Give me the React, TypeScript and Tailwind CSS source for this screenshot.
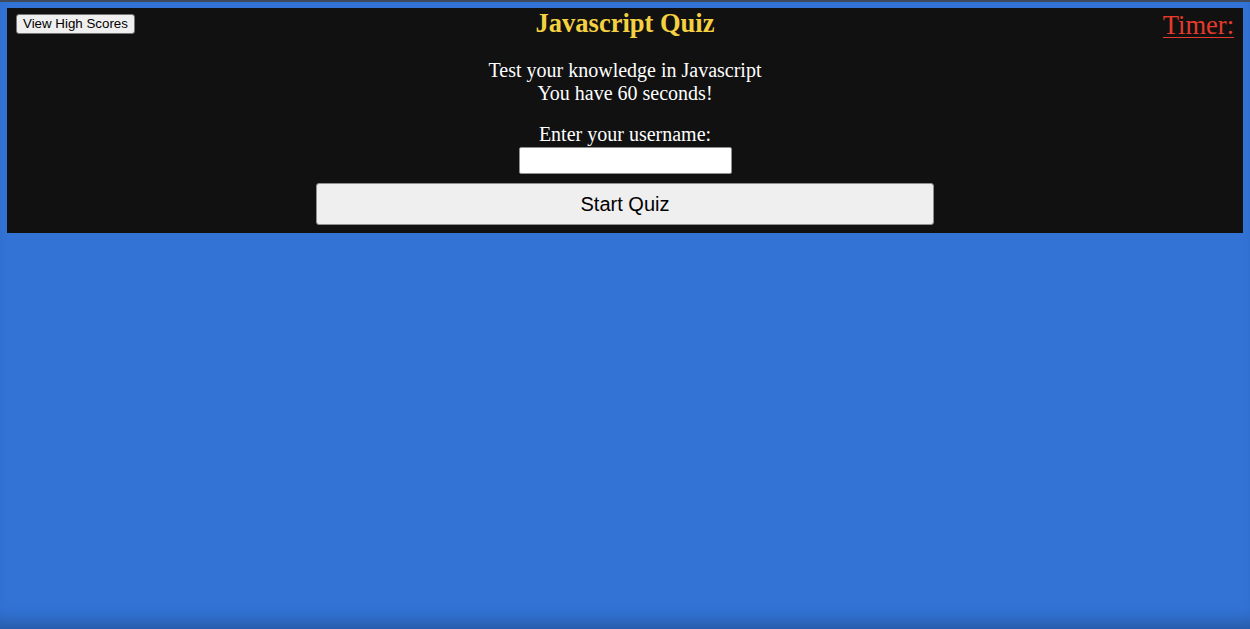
import React from "react";

export default function App() {
  return (
    <div className="min-h-[629px] bg-[#3273d5] border-t-2 border-[#3d4a5c] shadow-[inset_0_-18px_18px_-12px_rgba(0,0,0,0.25)] font-['Liberation_Serif',serif]">
      <div className="mx-[7px] mt-[6px] bg-[#111111] pb-[8px]">
        <div className="grid grid-cols-[1fr_auto_1fr] items-start px-[9px]">
          <div className="flex justify-start">
            <button className="mt-[6px] h-[20px] px-[6px] bg-[#efefef] border border-[#767676] rounded-[3px] text-[13.33px] leading-[18px] text-black font-['Liberation_Sans',Arial,sans-serif]">
              View High Scores
            </button>
          </div>
          <h1 className="text-[26.5px] leading-[30px] font-bold text-[#f5d142]">Javascript Quiz</h1>
          <div className="flex justify-end">
            <span className="mt-[2px] text-[26.5px] leading-[30px] text-[#e53b2c] underline decoration-1 underline-offset-[3px]">Timer:</span>
          </div>
        </div>
        <div className="flex flex-col items-center text-white text-[20px] leading-[23px]">
          <p className="mt-[19px] text-center">
            Test your knowledge in Javascript
            <br />
            You have 60 seconds!
          </p>
          <label className="mt-[18px]">Enter your username:</label>
          <input
            type="text"
            className="mt-[1px] w-[213px] h-[27px] bg-white border border-[#8f8f8f] rounded-[2px] text-black text-[14px] px-1"
          />
          <button className="mt-[9px] w-1/2 h-[42px] bg-[#efefef] border border-[#8f8f8f] rounded-[3px] text-[20px] text-black font-['Liberation_Sans',Arial,sans-serif]">
            Start Quiz
          </button>
        </div>
      </div>
    </div>
  );
}
